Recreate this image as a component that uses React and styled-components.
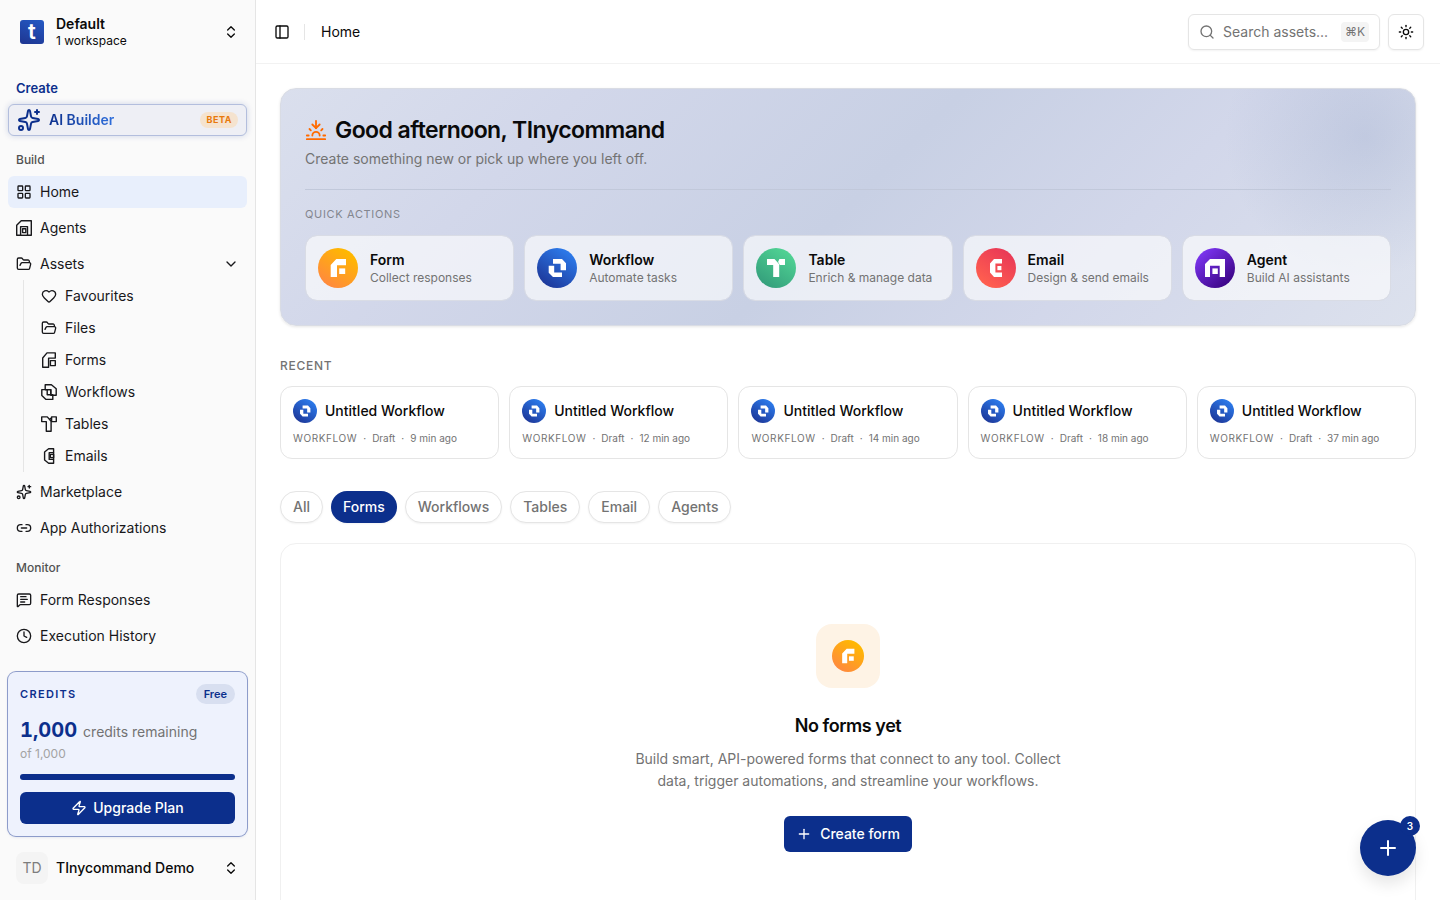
import React, { useState } from "react";
import styled, { createGlobalStyle } from "styled-components";
import {
  ChevronDown,
  ChevronsUpDown,
  Clock,
  FolderOpen,
  Heart,
  LayoutGrid,
  Link2,
  MessageSquareText,
  PanelLeft,
  Plus,
  Search,
  Sparkles,
  Sun,
  Sunset,
  Zap,
} from "lucide-react";

// product marks, drawn on a 40 x 40 circle
const marks = {
  form: {
    from: "#ff8a3d",
    to: "#ffb800",
    shapes: ["M12.7 29V17L18.3 11H28v6.2h-9V29z", "M21.2 20.4h6V26h-6z"],
  },
  workflow: {
    from: "#1e3a9c",
    to: "#2b78e8",
    shapes: [
      "M16 11h9l4 4.3v7h-5.4v-6.6H16z",
      "M11.7 17.8h5.5v6.6H25V29h-9l-4.3-4.3z",
    ],
  },
  table: {
    from: "#35a07c",
    to: "#4fd193",
    shapes: ["M11 11h7.5l4.7 5.2V29h-6V17H11z", "M23.4 11H29v6h-5.2l-1.7-3z"],
  },
  email: {
    from: "#ff5f4f",
    to: "#ea3a56",
    shapes: ["M18 11h8v4.4h-6.6v9.2H26V29h-8l-4-4.4v-9.2z", "M21.4 18h4v4.2h-4z"],
  },
  agent: {
    from: "#3b0485",
    to: "#7c35f0",
    flip: true,
    shapes: ["M10 29V16l5-5h15v18h-5.3V17.8H15V29z", "M17.4 20.4h5.4V26h-5.4z"],
  },
};

const outlines = {
  agent: [
    "M.7 15.3V5.2L5.2.7h10.1v14.6h-3.8V6.6H4.6v8.7z",
    "M6.6 8.8h3.2v3.8H6.6z",
    "M4.6 15.3h6.9",
  ],
  form: ["M1.7 15.3V6L6 .9h8.3v5.2H7.6v9.2z", "M9.4 8.6h4.9v5H9.4z"],
  workflow: [
    "M4.2.8h6.2l4.8 4v6.4H9.8V5.6H4.2z",
    "M.8 5.6h5.4v5.2h5.6v4.6H5L.8 11.4z",
    "M4.2 5.6h5.6v5.2",
  ],
  table: ["M.7.9h5.6l3.8 4.4v9.9H5.3V5.6H.7z", "M10.6.9h4.7v4.7h-4.7z", "M8.6 3.4l2-1.6"],
  email: [
    "M7.6.8h5v3.8H8.2v6.8h4.4v3.8h-5L3.6 12V4z",
    "M9.4 6.4h3.2v3.2H9.4z",
    "M12.6 4.6v6.8",
  ],
};

function Mark({ kind, size = 40 }) {
  const mark = marks[kind];
  const id = `mark-${kind}`;
  return (
    <MarkSvg width={size} height={size} viewBox="0 0 40 40" aria-hidden="true">
      <defs>
        <linearGradient
          id={id}
          x1={mark.flip ? "0.85" : "0.2"}
          y1="0.9"
          x2={mark.flip ? "0.15" : "0.75"}
          y2="0.1"
        >
          <stop offset="0" stopColor={mark.from} />
          <stop offset="1" stopColor={mark.to} />
        </linearGradient>
      </defs>
      <circle cx="20" cy="20" r="20" fill={`url(#${id})`} />
      {mark.shapes.map((d) => (
        <path key={d} d={d} fill="#fff" />
      ))}
    </MarkSvg>
  );
}

function Outline({ kind }) {
  return (
    <MarkSvg
      width="16"
      height="16"
      viewBox="0 0 16 16"
      fill="none"
      stroke="currentColor"
      strokeWidth="1.4"
      strokeLinejoin="round"
      aria-hidden="true"
    >
      {outlines[kind].map((d) => (
        <path key={d} d={d} />
      ))}
    </MarkSvg>
  );
}

const assets = [
  { label: "Favourites", icon: <Heart size={16} /> },
  { label: "Files", icon: <FolderOpen size={16} /> },
  { label: "Forms", icon: <Outline kind="form" /> },
  { label: "Workflows", icon: <Outline kind="workflow" /> },
  { label: "Tables", icon: <Outline kind="table" /> },
  { label: "Emails", icon: <Outline kind="email" /> },
];

const actions = [
  { kind: "form", title: "Form", text: "Collect responses" },
  { kind: "workflow", title: "Workflow", text: "Automate tasks" },
  { kind: "table", title: "Table", text: "Enrich & manage data" },
  { kind: "email", title: "Email", text: "Design & send emails" },
  { kind: "agent", title: "Agent", text: "Build AI assistants" },
];

const recent = ["9 min ago", "12 min ago", "14 min ago", "18 min ago", "37 min ago"];

const tabs = ["All", "Forms", "Workflows", "Tables", "Email", "Agents"];

function AppSidebar() {
  return (
    <Sidebar>
      <Workspace type="button">
        <LogoBox>
          <Logo>t</Logo>
        </LogoBox>
        <WorkspaceText>
          <strong>Default</strong>
          <span>1 workspace</span>
        </WorkspaceText>
        <ChevronsUpDown size={16} />
      </Workspace>

      <Nav>
        <CreateLabel>Create</CreateLabel>
        <Builder href="#builder">
          <Sparkles size={24} />
          <BuilderText>AI Builder</BuilderText>
          <Beta>BETA</Beta>
        </Builder>

        <GroupLabel>Build</GroupLabel>
        <NavList>
          <li>
            <NavLink href="#home" $active>
              <LayoutGrid size={16} />
              Home
            </NavLink>
          </li>
          <li>
            <NavLink href="#agents">
              <Outline kind="agent" />
              Agents
            </NavLink>
          </li>
          <li>
            <NavLink href="#assets">
              <FolderOpen size={16} />
              <Grow>Assets</Grow>
              <ChevronDown size={16} />
            </NavLink>
            <SubList>
              {assets.map((item) => (
                <li key={item.label}>
                  <NavLink href={`#${item.label.toLowerCase()}`}>
                    {item.icon}
                    {item.label}
                  </NavLink>
                </li>
              ))}
            </SubList>
          </li>
          <li>
            <NavLink href="#marketplace">
              <Sparkles size={16} />
              Marketplace
            </NavLink>
          </li>
          <li>
            <NavLink href="#authorizations">
              <Link2 size={16} />
              App Authorizations
            </NavLink>
          </li>
        </NavList>

        <GroupLabel>Monitor</GroupLabel>
        <NavList>
          <li>
            <NavLink href="#responses">
              <MessageSquareText size={16} />
              Form Responses
            </NavLink>
          </li>
          <li>
            <NavLink href="#history">
              <Clock size={16} />
              Execution History
            </NavLink>
          </li>
        </NavList>
      </Nav>

      <Credits>
        <CreditsTop>
          <h2>CREDITS</h2>
          <Plan>Free</Plan>
        </CreditsTop>
        <CreditsLeft>
          <strong>1,000</strong>
          <span>credits remaining</span>
        </CreditsLeft>
        <CreditsTotal>of 1,000</CreditsTotal>
        <Bar />
        <Upgrade type="button">
          <Zap size={16} />
          Upgrade Plan
        </Upgrade>
      </Credits>

      <User type="button">
        <Avatar>TD</Avatar>
        <Grow>TInycommand Demo</Grow>
        <ChevronsUpDown size={16} />
      </User>
    </Sidebar>
  );
}

function App() {
  const [tab, setTab] = useState("Forms");

  return (
    <Wrapper>
      <GlobalStyle />
      <AppSidebar />
      <Main>
        <Header>
          <Toggle type="button" aria-label="Toggle sidebar">
            <PanelLeft size={16} />
          </Toggle>
          <Separator />
          <Crumb>Home</Crumb>
          <SearchBox>
            <Search size={16} />
            <input type="text" placeholder="Search assets..." aria-label="Search assets" />
            <kbd>⌘K</kbd>
          </SearchBox>
          <ThemeButton type="button" aria-label="Change theme">
            <Sun size={16} />
          </ThemeButton>
        </Header>

        <Content>
          <Hero>
            <Greeting>
              <Sunset size={24} />
              <h1>Good afternoon, TInycommand</h1>
            </Greeting>
            <HeroText>Create something new or pick up where you left off.</HeroText>
            <HeroLabel>QUICK ACTIONS</HeroLabel>
            <CardGrid>
              {actions.map((action) => (
                <Action type="button" key={action.kind}>
                  <Mark kind={action.kind} />
                  <ActionText>
                    <strong>{action.title}</strong>
                    <span>{action.text}</span>
                  </ActionText>
                </Action>
              ))}
            </CardGrid>
          </Hero>

          <RecentLabel>RECENT</RecentLabel>
          <CardGrid>
            {recent.map((time) => (
              <RecentCard href="#workflow" key={time}>
                <RecentTitle>
                  <Mark kind="workflow" size={24} />
                  Untitled Workflow
                </RecentTitle>
                <Meta>
                  <Kind>WORKFLOW</Kind>
                  <span>·</span>
                  <span>Draft</span>
                  <span>·</span>
                  <span>{time}</span>
                </Meta>
              </RecentCard>
            ))}
          </CardGrid>

          <Tabs>
            {tabs.map((name) => (
              <Tab
                type="button"
                key={name}
                $active={name === tab}
                onClick={() => setTab(name)}
              >
                {name}
              </Tab>
            ))}
          </Tabs>

          <Empty>
            <EmptyIcon>
              <Mark kind="form" size={32} />
            </EmptyIcon>
            <h2>No forms yet</h2>
            <p>
              Build smart, API-powered forms that connect to any tool. Collect data,
              trigger automations, and streamline your workflows.
            </p>
            <CreateButton type="button">
              <Plus size={16} />
              Create form
            </CreateButton>
          </Empty>
        </Content>
      </Main>

      <Fab type="button" aria-label="Create new">
        <Plus size={24} />
        <FabBadge>3</FabBadge>
      </Fab>
    </Wrapper>
  );
}

export default App;

const GlobalStyle = createGlobalStyle`
  * {
    box-sizing: border-box;
    margin: 0;
    padding: 0;
  }
  body {
    font-family: Inter, "Liberation Sans", sans-serif;
    font-size: 14px;
    line-height: 20px;
    color: #0a0a0a;
    background: #fff;
  }
  button,
  input,
  kbd {
    font: inherit;
    color: inherit;
    border: 0;
    background: none;
  }
  button {
    cursor: pointer;
  }
  a {
    color: inherit;
    text-decoration: none;
  }
  ul {
    list-style: none;
  }
  svg {
    flex-shrink: 0;
  }
`;

const MarkSvg = styled.svg`
  display: block;
`;

const Wrapper = styled.div`
  display: flex;
  height: 100vh;
`;

const Sidebar = styled.aside`
  display: flex;
  flex-direction: column;
  flex-shrink: 0;
  width: 256px;
  padding: 8px;
  background: #fafafa;
  border-right: 1px solid #e5e5e5;
`;

const Workspace = styled.button`
  display: flex;
  align-items: center;
  gap: 8px;
  height: 48px;
  padding: 0 8px;
  text-align: left;
`;

const LogoBox = styled.span`
  display: flex;
  align-items: center;
  justify-content: center;
  width: 32px;
  height: 32px;
`;

const Logo = styled.span`
  width: 24px;
  height: 24px;
  border-radius: 3px;
  background: linear-gradient(20deg, #1e3590, #2459c4);
  color: #fff;
  font-size: 22px;
  font-weight: 600;
  line-height: 22px;
  text-align: center;
`;

const WorkspaceText = styled.span`
  display: flex;
  flex: 1;
  flex-direction: column;
  strong {
    font-weight: 600;
    line-height: 18px;
  }
  span {
    font-size: 12px;
    line-height: 16px;
  }
`;

const Nav = styled.nav`
  flex: 1;
  min-height: 0;
  margin-top: 16px;
`;

const GroupLabel = styled.h3`
  padding: 0 8px;
  margin-top: 8px;
  font-size: 12px;
  font-weight: 500;
  line-height: 32px;
  color: #525252;
`;

const CreateLabel = styled(GroupLabel)`
  margin-top: 0;
  font-size: 13px;
  font-weight: 600;
  color: #0c2f8c;
`;

const Builder = styled.a`
  display: flex;
  align-items: center;
  gap: 8px;
  height: 32px;
  padding: 0 8px;
  border: 1px solid #b3bedd;
  border-radius: 6px;
  background: #eeeff5;
  box-shadow: 0 0 6px rgba(12, 47, 140, 0.18);
  color: #0c2f8c;
`;

const BuilderText = styled.span`
  font-weight: 600;
  background: linear-gradient(90deg, #0c2f8c, #2f6fdc);
  background-clip: text;
  color: transparent;
`;

const Beta = styled.span`
  margin-left: auto;
  padding: 0 6px;
  border-radius: 8px;
  background: #f5e3cf;
  color: #e8790c;
  font-size: 9px;
  font-weight: 700;
  line-height: 16px;
  letter-spacing: 0.06em;
`;

const NavList = styled.ul`
  display: flex;
  flex-direction: column;
  gap: 4px;
`;

const SubList = styled.ul`
  margin-left: 15px;
  padding-left: 9px;
  border-left: 1px solid #e5e5e5;
`;

const NavLink = styled.a`
  display: flex;
  align-items: center;
  gap: 8px;
  height: 32px;
  padding: 0 8px;
  border-radius: 6px;
  background: ${({ $active }) => ($active ? "#e8effc" : "transparent")};
  color: #18181b;
`;

const Grow = styled.span`
  flex: 1;
`;

const Credits = styled.section`
  padding: 12px;
  border-radius: 8px;
  background: #eef2fd;
  box-shadow: 0 0 0 1px #8d9cca, 0 1px 3px rgba(12, 47, 140, 0.15);
`;

const CreditsTop = styled.div`
  display: flex;
  align-items: center;
  justify-content: space-between;
  h2 {
    color: #0c2f8c;
    font-size: 11px;
    font-weight: 600;
    letter-spacing: 0.12em;
  }
`;

const Plan = styled.span`
  padding: 0 8px;
  border-radius: 10px;
  background: #d8dff0;
  color: #0c2f8c;
  font-size: 11px;
  font-weight: 600;
`;

const CreditsLeft = styled.p`
  display: flex;
  align-items: baseline;
  gap: 6px;
  margin-top: 12px;
  line-height: 28px;
  color: #737373;
  strong {
    color: #0c2f8c;
    font-size: 20px;
    font-weight: 700;
    font-variant-numeric: tabular-nums;
  }
`;

const CreditsTotal = styled.p`
  font-size: 12px;
  line-height: 16px;
  color: #a3a3a3;
`;

const Bar = styled.div`
  height: 6px;
  margin: 12px 0;
  border-radius: 3px;
  background: #0c2f8c;
`;

const Upgrade = styled.button`
  display: flex;
  align-items: center;
  justify-content: center;
  gap: 6px;
  width: 100%;
  height: 32px;
  border-radius: 6px;
  background: #0c2f8c;
  color: #fff;
  font-weight: 500;
`;

const User = styled.button`
  display: flex;
  align-items: center;
  gap: 8px;
  height: 48px;
  margin-top: 8px;
  padding: 0 8px;
  text-align: left;
  font-weight: 500;
`;

const Avatar = styled.span`
  width: 32px;
  border-radius: 8px;
  background: #f4f4f4;
  color: #7d7d7d;
  font-weight: 400;
  line-height: 32px;
  text-align: center;
`;

const Main = styled.main`
  flex: 1;
  min-width: 0;
  overflow-y: auto;
  scrollbar-width: none;
`;

const Header = styled.header`
  display: flex;
  align-items: center;
  height: 64px;
  padding: 0 16px;
  border-bottom: 1px solid #f2f2f2;
`;

const Toggle = styled.button`
  display: flex;
  padding: 2px;
`;

const Separator = styled.span`
  width: 1px;
  height: 16px;
  margin: 0 16px 0 12px;
  background: #e5e5e5;
`;

const Crumb = styled.span`
  flex: 1;
`;

const SearchBox = styled.label`
  display: flex;
  align-items: center;
  gap: 8px;
  width: 192px;
  height: 36px;
  padding: 0 10px;
  border: 1px solid #e5e5e5;
  border-radius: 6px;
  box-shadow: 0 1px 2px rgba(0, 0, 0, 0.05);
  color: #737373;
  input {
    flex: 1;
    min-width: 0;
    outline: none;
  }
  input::placeholder {
    color: #737373;
    opacity: 1;
  }
  kbd {
    padding: 0 4px;
    border-radius: 4px;
    background: #f4f4f4;
    font-size: 12px;
  }
`;

const ThemeButton = styled.button`
  display: flex;
  align-items: center;
  justify-content: center;
  width: 36px;
  height: 36px;
  margin-left: 8px;
  border: 1px solid #e5e5e5;
  border-radius: 6px;
  box-shadow: 0 1px 2px rgba(0, 0, 0, 0.05);
`;

const Content = styled.div`
  padding: 24px;
`;

const Hero = styled.section`
  padding: 24px;
  border: 1px solid #d9dce4;
  border-radius: 16px;
  background: radial-gradient(
      circle 140px at calc(100% - 50px) 48px,
      rgba(135, 153, 193, 0.26),
      rgba(135, 153, 193, 0.13) 50%,
      rgba(135, 153, 193, 0)
    ),
    linear-gradient(135deg, #dadfed 0%, #d2d7ea 22%, #c8d0e4 50%, #d2d7ea 72%, #dce1ed 100%);
  box-shadow: 0 1px 3px rgba(0, 0, 0, 0.1);
`;

const Greeting = styled.div`
  display: flex;
  align-items: center;
  gap: 8px;
  svg {
    width: 22px;
    height: 22px;
    color: #ff6b00;
  }
  h1 {
    font-size: 23px;
    font-weight: 600;
    line-height: 34px;
    letter-spacing: -0.025em;
  }
`;

const HeroText = styled.p`
  margin-top: 2px;
  padding-bottom: 20px;
  border-bottom: 1px solid #c1c8da;
  color: #737373;
`;

const HeroLabel = styled.h2`
  margin: 16px 0 12px;
  font-size: 11px;
  font-weight: 400;
  line-height: 17px;
  letter-spacing: 0.06em;
  color: #83868f;
`;

const CardGrid = styled.div`
  display: grid;
  grid-template-columns: repeat(5, minmax(0, 1fr));
  gap: 10px;
`;

const Action = styled.button`
  display: flex;
  align-items: center;
  gap: 12px;
  padding: 12px;
  border: 1px solid #d9dce5;
  border-radius: 12px;
  background: rgba(255, 255, 255, 0.62);
  background-clip: padding-box;
  text-align: left;
`;

const ActionText = styled.span`
  display: flex;
  flex-direction: column;
  strong {
    font-weight: 600;
    line-height: 20px;
  }
  span {
    color: #737373;
    font-size: 12px;
    line-height: 16px;
  }
`;

const RecentLabel = styled.h2`
  margin: 32px 0 12px;
  font-size: 12px;
  font-weight: 500;
  line-height: 16px;
  letter-spacing: 0.06em;
  color: #737373;
`;

const RecentCard = styled.a`
  display: flex;
  flex-direction: column;
  gap: 8px;
  padding: 12px;
  border: 1px solid #e5e5e5;
  border-radius: 12px;
`;

const RecentTitle = styled.span`
  display: flex;
  align-items: center;
  gap: 8px;
  font-weight: 500;
`;

const Meta = styled.span`
  display: flex;
  gap: 6px;
  font-size: 10px;
  line-height: 15px;
  color: #737373;
`;

const Kind = styled.span`
  letter-spacing: 0.06em;
`;

const Tabs = styled.div`
  display: flex;
  gap: 8px;
  margin: 32px 0 20px;
`;

const Tab = styled.button`
  height: 32px;
  padding: 0 12px;
  border: ${({ $active }) => ($active ? "0" : "1px solid #e5e5e5")};
  border-radius: 16px;
  background: ${({ $active }) => ($active ? "#0c2f8c" : "#fff")};
  color: ${({ $active }) => ($active ? "#fff" : "#737373")};
  box-shadow: 0 1px 2px rgba(0, 0, 0, 0.05);
  font-weight: 500;
`;

const Empty = styled.section`
  display: flex;
  flex-direction: column;
  align-items: center;
  padding: 80px 24px;
  border: 1px solid #f0f0f0;
  border-radius: 16px;
  text-align: center;
  h2 {
    margin: 24px 0 8px;
    font-size: 18px;
    font-weight: 600;
    line-height: 28px;
    letter-spacing: -0.025em;
  }
  p {
    max-width: 448px;
    line-height: 22px;
    color: #737373;
  }
`;

const EmptyIcon = styled.div`
  padding: 16px;
  border-radius: 16px;
  background: #fef3e5;
`;

const CreateButton = styled.button`
  display: flex;
  align-items: center;
  gap: 8px;
  height: 36px;
  margin-top: 24px;
  padding: 0 12px;
  border-radius: 6px;
  background: #0c2f8c;
  color: #fff;
  font-weight: 500;
`;

const Fab = styled.button`
  position: fixed;
  right: 24px;
  bottom: 24px;
  display: flex;
  align-items: center;
  justify-content: center;
  width: 56px;
  height: 56px;
  border-radius: 50%;
  background: #0c2f8c;
  color: #fff;
  box-shadow: 0 8px 16px rgba(0, 0, 0, 0.1);
`;

const FabBadge = styled.span`
  position: absolute;
  top: -4px;
  right: -4px;
  width: 20px;
  border-radius: 50%;
  background: #0c2f8c;
  font-size: 10px;
  font-weight: 600;
`;
